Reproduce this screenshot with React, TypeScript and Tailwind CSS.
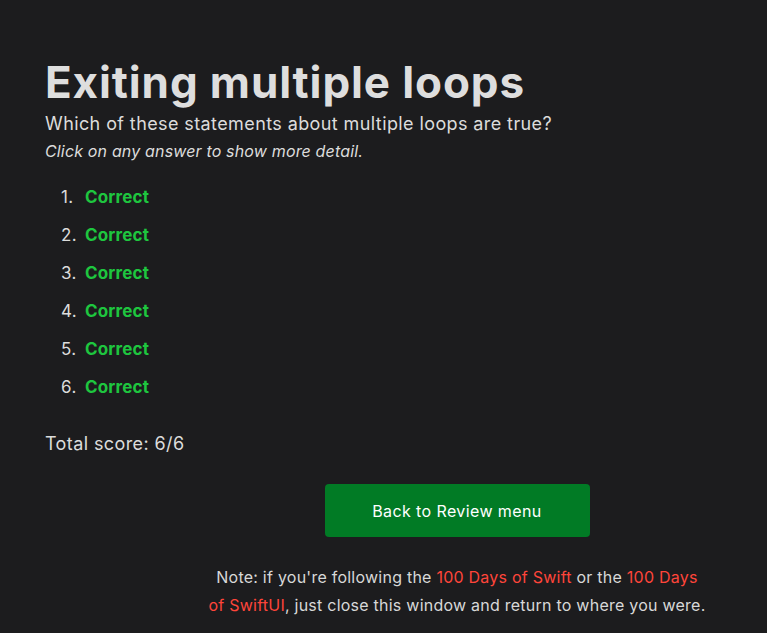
import React from "react";

const answers = [1, 2, 3, 4, 5, 6];

export default function App() {
  return (
    <div
      className="min-h-screen w-screen overflow-hidden bg-[#1c1c1e] text-[#dcdcdc] tracking-[0.025em]"
      style={{ fontFamily: "Inter, 'Noto Sans', sans-serif" }}
    >
      <div className="w-[869px] pl-[45px] pt-[53px]">
        <h1 className="text-[44px] font-bold leading-[58px] tracking-[0.02em] text-[#dedede]">Exiting multiple loops</h1>
        <p className="text-[18px] leading-[26px]">Which of these statements about multiple loops are true?</p>
        <p className="text-[16px] italic leading-[28px] tracking-[0.01em]">Click on any answer to show more detail.</p>

        <ol className="mt-[21px] flex flex-col gap-[16px] pl-[16px]">
          {answers.map((n) => (
            <li key={n} className="flex items-center text-[17px] leading-[22px]">
              <span className="w-[24px] text-[#dcdcdc]">{n}.</span>
              <span className="font-bold tracking-[0.01em] text-[#1ec63f]">Correct</span>
            </li>
          ))}
        </ol>

        <p className="mt-[33px] text-[18px] leading-[26px]">Total score: 6/6</p>

        <div className="flex flex-col items-center">
          <button className="mt-[27px] h-[53px] w-[265px] rounded-[4px] bg-[#017b25] text-[16px] text-white">
            Back to Review menu
          </button>
          <p className="mt-[26px] w-[520px] text-center text-[16px] leading-[28px] tracking-[0.015em] text-[#d8d8d8]">
            Note: if you're following the <span className="text-[#ff453a]">100 Days of Swift</span> or the{" "}
            <span className="text-[#ff453a]">
              100 Days
              <br />
              of SwiftUI
            </span>
            , just close this window and return to where you were.
          </p>
        </div>
      </div>
    </div>
  );
}
